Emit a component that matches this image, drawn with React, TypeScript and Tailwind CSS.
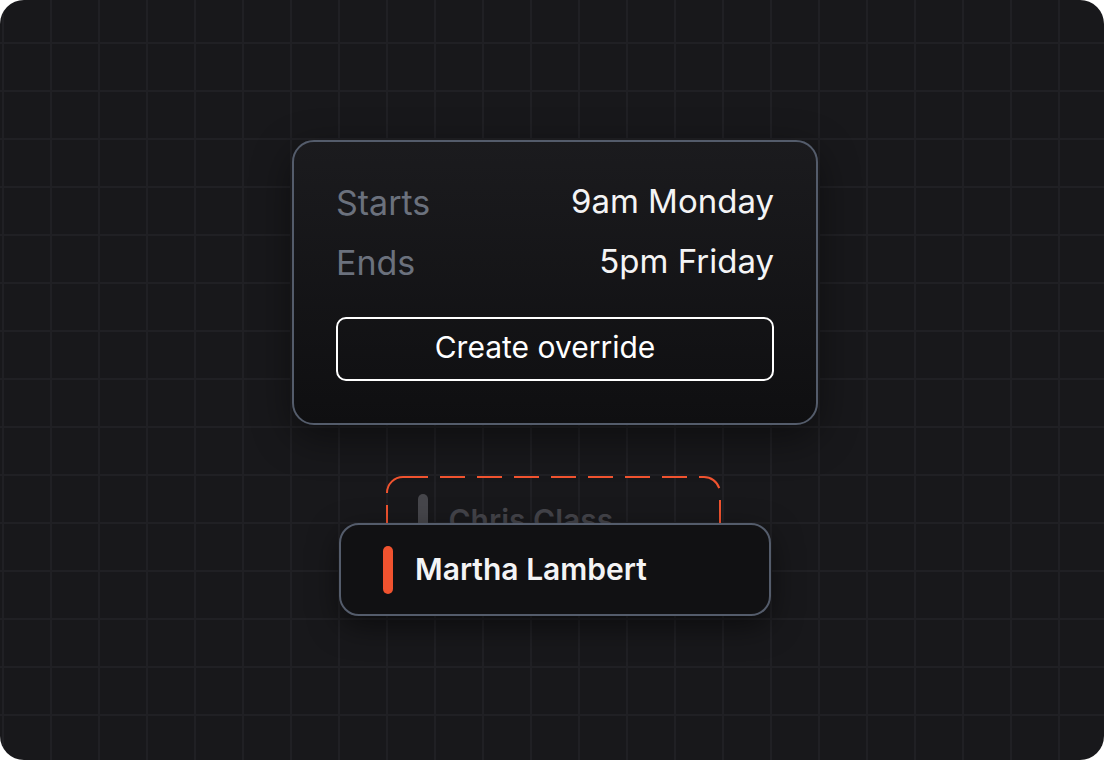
import React from 'react';

const Row: React.FC<{ label: string; value: string }> = ({ label, value }) => (
  <div className="flex h-10 items-center justify-between">
    <span className="text-[34px] text-[#6b717d]">{label}</span>
    <span className="text-[33px] text-[#f4f4f5]">{value}</span>
  </div>
);

const App: React.FC = () => {
  return (
    <div className="h-[760px] w-[1104px] bg-white font-[Inter,sans-serif]">
      <div className="flex h-full w-full flex-col items-center justify-center rounded-[24px] bg-[#18181b] bg-[linear-gradient(to_right,#202024_2px,transparent_2px),linear-gradient(to_bottom,#202024_2px,transparent_2px)] bg-[size:48px_48px] bg-[position:2px_42px] pl-[6px] pb-[4px]">
        {/* schedule card */}
        <div className="w-[526px] rounded-[22px] border-2 border-[#545c6b] bg-gradient-to-b from-[#1b1b1e] to-[#0f0f11] px-[42px] pt-[40px] pb-[42px] shadow-[0_12px_40px_rgba(0,0,0,0.45)]">
          <div className="flex flex-col gap-5">
            <Row label="Starts" value="9am Monday" />
            <Row label="Ends" value="5pm Friday" />
          </div>
          <button className="mt-[35px] flex h-16 w-full items-center justify-center rounded-[10px] border-2 border-white pr-[20px] pb-[3px] text-[30px] text-white">
            Create override
          </button>
        </div>

        {/* stacked people */}
        <div className="mt-[51px] flex flex-col items-center">
          <div className="relative flex h-[84px] w-[335px] items-start pl-[32px] pt-[18px] -translate-x-[2px]">
            <svg className="absolute inset-0" width="335" height="84" viewBox="0 0 335 84" fill="none">
              <rect x="1" y="1" width="333" height="82" rx="16" stroke="#f0532f" strokeWidth="2" strokeDasharray="25 12" />
            </svg>
            <div className="h-12 w-[10px] rounded-full bg-[#5a5a5f] opacity-70" />
            <span className="ml-[21px] mt-[4px] text-[30px] font-semibold text-[#44444a]">Chris Class</span>
          </div>
          <div className="relative z-10 -mt-[37px] flex h-[93px] w-[432px] items-center gap-[22px] rounded-[20px] border-2 border-[#545c6b] bg-[#111113] pl-[42px] shadow-[0_10px_30px_rgba(0,0,0,0.5)]">
            <div className="h-12 w-[10px] rounded-full bg-[#f0532f]" />
            <span className="text-[30px] font-semibold text-[#f4f4f5]">Martha Lambert</span>
          </div>
        </div>
      </div>
    </div>
  );
};

export default App;
